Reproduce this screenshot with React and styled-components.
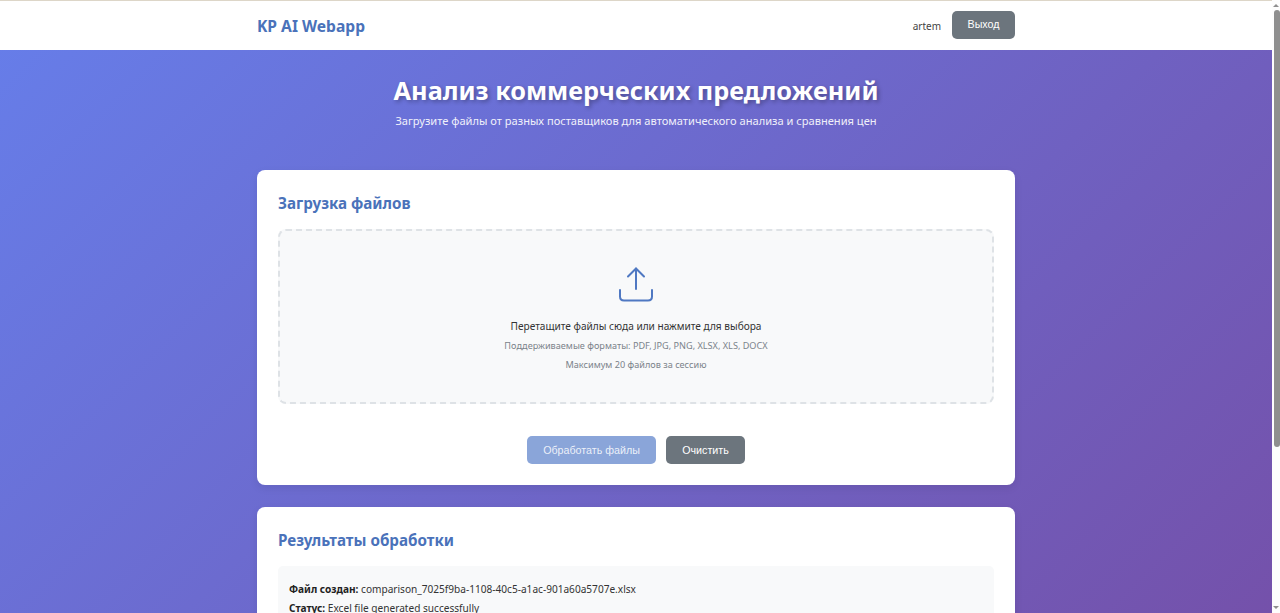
import React from 'react'
import styled, { createGlobalStyle } from 'styled-components';

const GlobalStyle = createGlobalStyle`
  body {
    margin: 0;
    font-family: "Noto Sans", "Open Sans", sans-serif;
    color: #333;
    background: linear-gradient(135deg, #667eea 0%, #764ba2 100%);
  }
`;

function UploadIcon() {
  return (
    <svg width="36" height="36" viewBox="0 0 36 36" fill="none" stroke="#4f78c2" strokeWidth="2" strokeLinecap="round" strokeLinejoin="round">
      <path d="M18 1.5V22" />
      <path d="M10 9.5L18 1.5L26 9.5" />
      <path d="M2 23V29.5C2 32 3.5 33.5 6 33.5H30C32.5 33.5 34 32 34 29.5V23" />
    </svg>
  );
}

function App() {
  return (
    <Page>
      <GlobalStyle />
      <NavBar>
        <NavInner>
          <Logo>KP AI Webapp</Logo>
          <UserBlock>
            <UserName>artem</UserName>
            <LogoutButton>Выход</LogoutButton>
          </UserBlock>
        </NavInner>
      </NavBar>
      <Container>
        <Hero>
          <HeroTitle>Анализ коммерческих предложений</HeroTitle>
          <HeroText>Загрузите файлы от разных поставщиков для автоматического анализа и сравнения цен</HeroText>
        </Hero>
        <Card>
          <CardTitle>Загрузка файлов</CardTitle>
          <DropZone>
            <IconWrap><UploadIcon /></IconWrap>
            <DropText>Перетащите файлы сюда или нажмите для выбора</DropText>
            <DropHint>Поддерживаемые форматы: PDF, JPG, PNG, XLSX, XLS, DOCX</DropHint>
            <DropHint>Максимум 20 файлов за сессию</DropHint>
          </DropZone>
          <ButtonRow>
            <ActionButton $primary disabled>Обработать файлы</ActionButton>
            <ActionButton>Очистить</ActionButton>
          </ButtonRow>
        </Card>
        <Card>
          <CardTitle>Результаты обработки</CardTitle>
          <ResultBox>
            <ResultLine><b>Файл создан:</b> comparison_7025f9ba-1108-40c5-a1ac-901a60a5707e.xlsx</ResultLine>
            <ResultLine><b>Статус:</b> Excel file generated successfully</ResultLine>
          </ResultBox>
        </Card>
      </Container>
      <ScrollTrack>
        <ScrollArrow viewBox="0 0 8 5"><path d="M4 1L7 4H1Z" /></ScrollArrow>
        <ScrollThumb />
        <ScrollArrow $down viewBox="0 0 8 5"><path d="M4 4L1 1H7Z" /></ScrollArrow>
      </ScrollTrack>
    </Page>
  )
}

const Page = styled.div`
  min-height: 100vh;
  padding-right: 8px;
`;
const NavBar = styled.header`
  background: #fff;
  border-top: 1px solid #ddd6c8;
  height: 49px;
`;
const NavInner = styled.div`
  width: 758px;
  height: 100%;
  margin: 0 auto;
  display: flex;
  align-items: center;
  justify-content: space-between;
`;
const Logo = styled.div`
  font-size: 15.6px;
  font-weight: 700;
  color: #4a72ba;
`;
const UserBlock = styled.div`
  display: flex;
  align-items: center;
  gap: 11px;
`;
const UserName = styled.span`
  font-size: 10px;
  color: #444;
`;
const LogoutButton = styled.button`
  width: 63px;
  height: 28px;
  margin-bottom: 2px;
  border: none;
  border-radius: 5px;
  background: #6c757d;
  color: #fff;
  font-family: "Liberation Sans", sans-serif;
  font-size: 10.7px;
  padding: 0 0 1px;
`;
const Container = styled.main`
  width: 758px;
  margin: 0 auto;
  padding-bottom: 21px;
`;
const Hero = styled.section`
  text-align: center;
  color: #fff;
  padding: 22px 0 41px;
`;
const HeroTitle = styled.h1`
  margin: 0 0 4px;
  font-size: 25.3px;
  line-height: 36px;
  font-weight: 700;
  text-shadow: 2px 2px 4px rgba(0, 0, 0, 0.3);
`;
const HeroText = styled.p`
  margin: 0;
  font-size: 11.1px;
  line-height: 17px;
  opacity: 0.9;
`;
const Card = styled.section`
  background: #fff;
  border-radius: 8px;
  padding: 21px;
  margin-bottom: 22px;
  box-shadow: 0 3px 8px rgba(0, 0, 0, 0.08);
`;
const CardTitle = styled.h2`
  margin: 0 0 14px;
  font-size: 15.2px;
  line-height: 24px;
  font-weight: 700;
  color: #4a72ba;
`;
const DropZone = styled.div`
  height: 175px;
  box-sizing: border-box;
  border: 2px dashed #dee2e6;
  border-radius: 8px;
  background: #f8f9fa;
  padding-top: 36px;
  display: flex;
  flex-direction: column;
  align-items: center;
`;
const IconWrap = styled.div`
  height: 36px;
  margin-bottom: 15px;
`;
const DropText = styled.p`
  margin: 0 0 3px;
  font-size: 10.1px;
  line-height: 17px;
  color: #333;
`;
const DropHint = styled.p`
  margin: 0 0 4px;
  font-size: 9.15px;
  line-height: 15px;
  color: #7b838a;
`;
const ButtonRow = styled.div`
  display: flex;
  justify-content: center;
  gap: 10px;
  margin-top: 32px;
`;
const ActionButton = styled.button`
  height: 28px;
  width: ${props => props.$primary ? '129px' : '79px'};
  border: none;
  border-radius: 5px;
  background: ${props => props.$primary ? '#8aa5d9' : '#6c757d'};
  color: ${props => props.$primary ? 'rgba(255,255,255,0.85)' : '#fff'};
  font-family: "Liberation Sans", sans-serif;
  font-size: 10.7px;
  padding: 0;
`;
const ResultBox = styled.div`
  background: #f8f9fa;
  border-radius: 5px;
  padding: 15px 11px 14px;
  min-height: 190px;
`;
const ResultLine = styled.p`
  margin: 0 0 2px;
  font-size: 10.1px;
  line-height: 17px;
  color: #333;
  b {
    color: #222;
  }
`;
const ScrollTrack = styled.div`
  position: fixed;
  top: 0;
  right: 0;
  bottom: 0;
  width: 8px;
  background: #fdfdfd;
  display: flex;
  flex-direction: column;
  align-items: flex-end;
`;
const ScrollArrow = styled.svg`
  width: 8px;
  height: 5px;
  flex: none;
  fill: #8f8f8f;
  margin: ${props => props.$down ? 'auto 0 3px' : '3px 0 2px'};
`;
const ScrollThumb = styled.div`
  width: 6px;
  height: 437px;
  background: #8f8f8f;
  border-radius: 3px;
`;
export default App;
